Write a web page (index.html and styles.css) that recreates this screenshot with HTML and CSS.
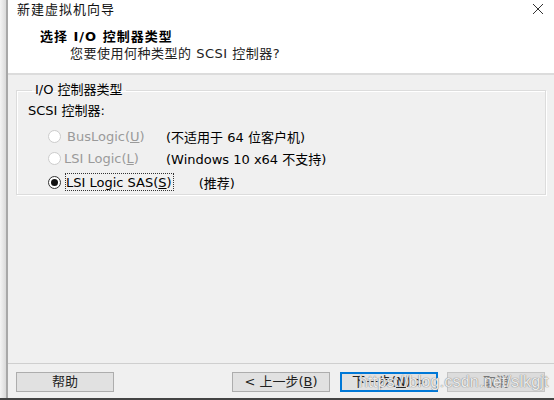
FILE: index.html
```html
<!DOCTYPE html>
<html lang="zh">
<head>
<meta charset="utf-8">
<link rel="stylesheet" href="styles.css">
</head>
<body>
<div class="window">
  <div class="edge"></div>
  <div class="dialog">
    <header class="top">
      <div class="titlebar">
        <span class="title">新建虚拟机向导</span>
        <svg class="close" width="12" height="12" viewBox="0 0 12 12"><path d="M1 1 L11 11 M11 1 L1 11" stroke="#333" stroke-width="1" fill="none"/></svg>
      </div>
      <div class="heading">选择 I/O 控制器类型</div>
      <div class="subheading">您要使用何种类型的 SCSI 控制器?</div>
    </header>
    <main class="body">
      <fieldset class="group">
        <legend>I/O 控制器类型</legend>
        <div class="label">SCSI 控制器:</div>
        <div class="options">
          <div class="opt disabled">
            <span class="radio"></span><span class="name">BusLogic(<u>U</u>)</span>
            <span class="note">(不适用于 64 位客户机)</span>
          </div>
          <div class="opt disabled">
            <span class="radio"></span><span class="name">LSI Logic(<u>L</u>)</span>
            <span class="note">(Windows 10 x64 不支持)</span>
          </div>
          <div class="opt checked">
            <span class="radio"></span><span class="name focus">LSI Logic SAS(<u>S</u>)</span>
            <span class="note rec">(推荐)</span>
          </div>
        </div>
      </fieldset>
    </main>
    <footer class="footer">
      <button class="btn">帮助</button>
      <div class="spacer"></div>
      <button class="btn">&lt; 上一步(<u>B</u>)</button>
      <button class="btn primary">下一步(<u>N</u>) &gt;</button>
      <button class="btn cancel">取消</button>
      <span class="watermark">https://blog.csdn.net/slkgjt</span>
    </footer>
  </div>
</div>
</body>
</html>
```
FILE: styles.css
```css
* { box-sizing: border-box; }
html, body { margin: 0; padding: 0; }
body {
  width: 554px; height: 400px; overflow: hidden;
  font-family: "DejaVu Sans", "Noto Sans CJK SC", sans-serif;
  font-size: 13px; color: #000;
  background: #f0f0f0;
}
.window { display: flex; width: 554px; height: 400px; border-bottom: 2px solid #444; }
.edge {
  width: 8px; flex: none;
  background: linear-gradient(to right, #f4f4f4, #dcdcdc 70%, #a8a8a8 80%, #a8a8a8);
}
.dialog { flex: 1; display: flex; flex-direction: column; background: #f0f0f0; }
.top {
  background: #fff; height: 75px; border-bottom: 2px solid #dcdcdc;
  display: flex; flex-direction: column;
}
.titlebar { display: flex; justify-content: space-between; align-items: center; padding: 1px 10px 0 9px; height: 15px; }
.title { font-size: 13px; letter-spacing: 1px; color: #111; font-family: "Noto Sans CJK SC", sans-serif; }
.close { margin-top: 2px; }
.heading {
  margin: 14px 0 0 32px; font-weight: bold; font-size: 13px; line-height: 16px; letter-spacing: 1px;
}
.subheading { margin: 1px 0 0 62px; font-size: 13px; line-height: 16px; color: #222; letter-spacing: 0.5px; }
.body { flex: 1; padding: 8px 8px 0 8px; }
.group {
  margin: 0; padding: 4px 0 10px 11px; height: 112px;
  border: 1px solid #dcdcdc; box-shadow: inset 1px 1px 0 #fff, 1px 1px 0 #fff;
}
.group legend { padding: 0 3px; margin-left: 4px; font-size: 13px; line-height: 14px; }
.label { font-size: 13px; line-height: 16px; margin-top: 2px; }
.options { display: flex; flex-direction: column; margin-top: 9px; padding-left: 20px; }
.opt { display: flex; align-items: center; height: 16px; position: relative; }
.opt + .opt { margin-top: 6px; }
.opt.checked { margin-top: 8px; }
.radio {
  width: 13px; height: 13px; border-radius: 50%; flex: none;
  border: 1px solid #333; background: #fff; margin-right: 6px; position: relative;
}
.opt.disabled .radio { border-color: #ccc; background: #fff; }
.opt.disabled .name { color: #9a9a9a; }
.opt.checked .radio::after {
  content: ""; position: absolute; left: 2px; top: 2px; width: 7px; height: 7px;
  border-radius: 50%; background: #111;
}
.name { width: 99px; }
.opt.disabled:nth-child(2) .name { margin-left: -3px; width: 102px; }
.focus { outline: 1px dotted #333; padding: 1px 1px 0 0; width: auto; margin-left: -1px; margin-right: 26px; line-height: 15px; }
.footer {
  height: 35px; display: flex; align-items: flex-start; gap: 9px;
  padding: 8px 9px 0 8px; border-top: 1px solid #cfcfcf; position: relative;
}
.spacer { flex: 1; }
.btn {
  width: 98px; height: 20px; margin: 0;
  font-family: "DejaVu Sans", "Noto Sans CJK SC", sans-serif; font-size: 13px; line-height: 16px;
  background: #e1e1e1; border: 1px solid #adadad; color: #222; padding: 0;
}
.btn.primary { border: 1px solid #0078d7; box-shadow: inset 0 0 0 1px #0078d7; margin-left: 1px; }
.btn.cancel { background: #dcdcdc; border-color: #c4c4c4; color: #777; }
.watermark {
  position: absolute; left: 351px; top: 8px; font-size: 16px; line-height: 20px;
  font-family: "Liberation Sans", sans-serif; color: rgba(255,255,255,0.85);
  text-shadow: 0 0 1px #777, 0 0 1px #999; pointer-events: none; letter-spacing: 0.2px;
}
```
